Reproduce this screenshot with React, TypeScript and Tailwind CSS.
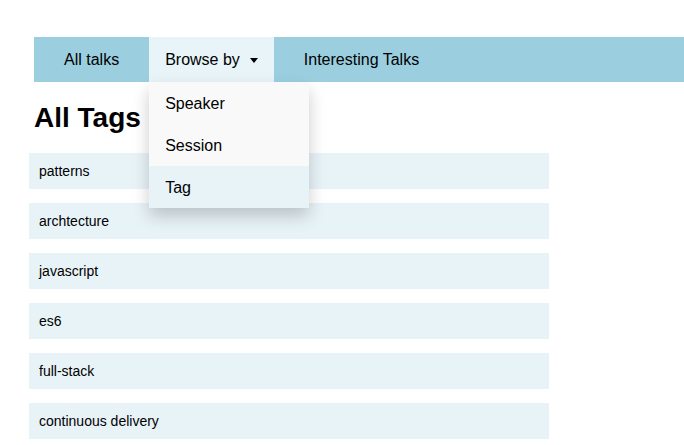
const tags = ["patterns", "archtecture", "javascript", "es6", "full-stack", "continuous delivery"];

export default function App() {
  return (
    <div className="min-h-[445px] bg-white pt-[37px] text-black" style={{ fontFamily: '"Liberation Sans", Arial, sans-serif' }}>
      <nav className="ml-[34px] flex h-[45px] bg-[#9bcfe0] text-[16px]">
        <a className="flex items-center px-[30px]">All talks</a>
        <div className="relative">
          <button className="flex h-full items-center gap-[10px] bg-[#e8f4f8] pl-[16px] pr-[16px]">
            Browse by
            <span className="mt-[1px] h-0 w-0 border-x-[4.5px] border-t-[5px] border-x-transparent border-t-black" />
          </button>
          <div className="absolute left-0 top-[45px] z-10 w-[160px] bg-[#f9f9f9] shadow-[0_8px_16px_0_rgba(0,0,0,0.2)]">
            <a className="flex h-[42px] items-center px-[16px] pt-[2px]">Speaker</a>
            <a className="flex h-[42px] items-center px-[16px] pt-[2px]">Session</a>
            <a className="flex h-[42px] items-center bg-[#e8f3f8] px-[16px] pt-[2px]">Tag</a>
          </div>
        </div>
        <a className="flex items-center px-[30px]">Interesting Talks</a>
      </nav>
      <h1 className="ml-[34px] mt-[20px] text-[28px] font-bold leading-[32px]">All Tags</h1>
      <ul className="ml-[29px] mt-[19px] flex w-[520px] flex-col gap-[14px]">
        {tags.map((t) => (
          <li key={t} className="flex h-[36px] items-center bg-[#e8f3f8] px-[10px] text-[14px]">
            {t}
          </li>
        ))}
      </ul>
    </div>
  );
}
